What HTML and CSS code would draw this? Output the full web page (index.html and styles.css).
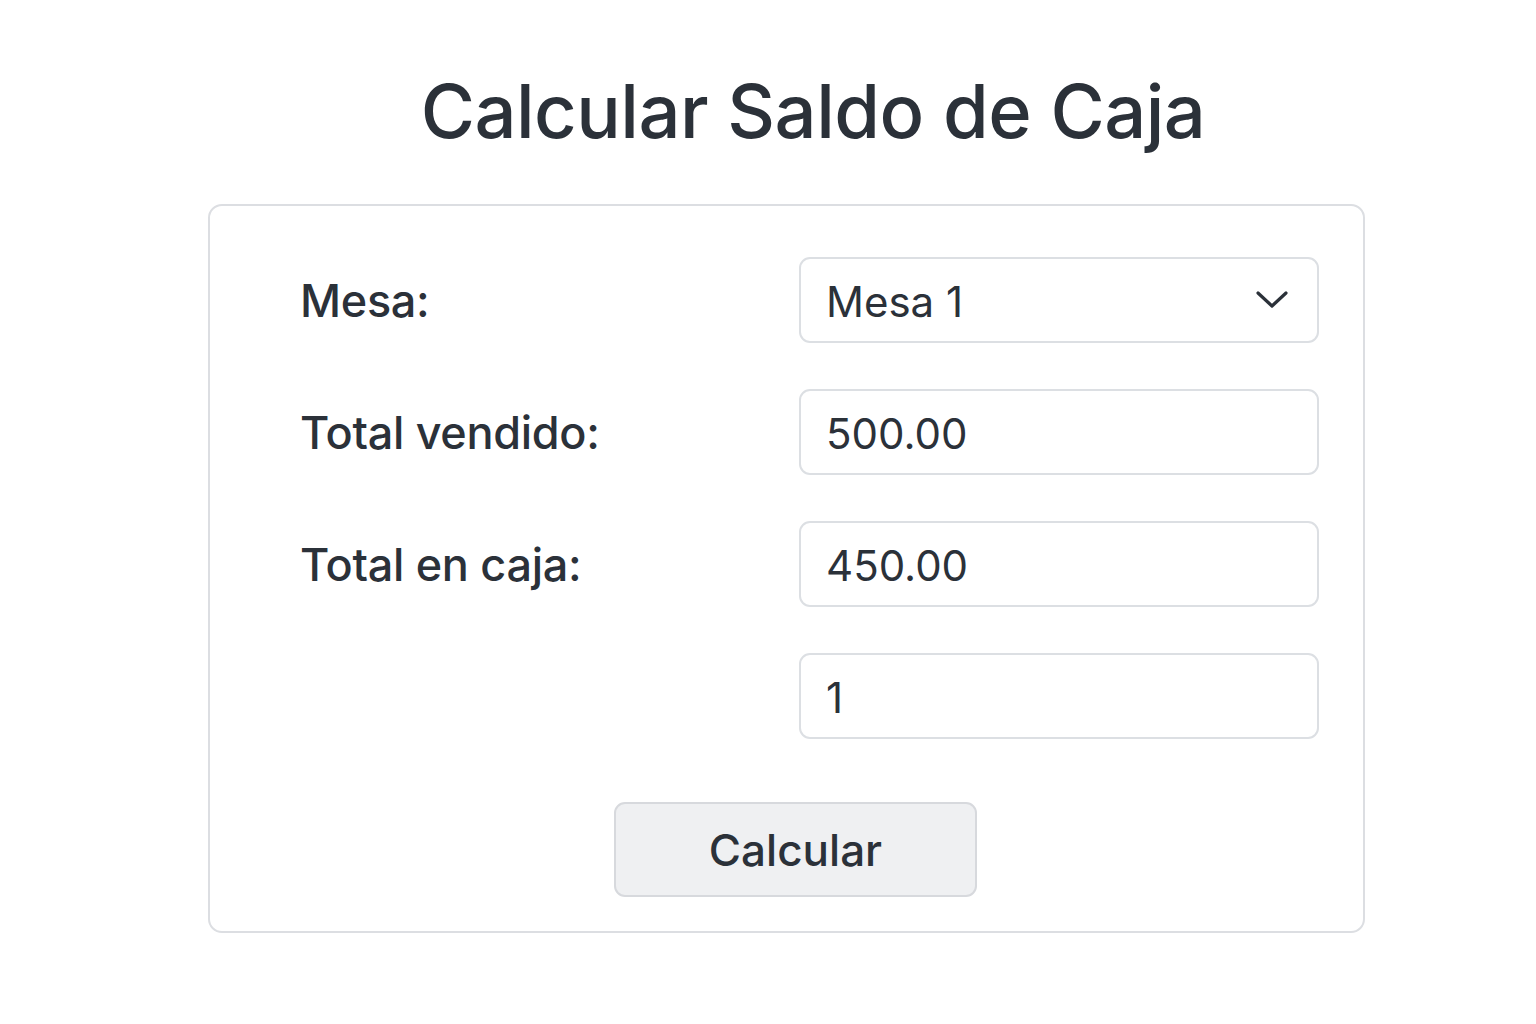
FILE: index.html
```html
<!DOCTYPE html>
<html lang="es">
<head>
<meta charset="utf-8">
<title>Calcular Saldo de Caja</title>
<link rel="stylesheet" href="styles.css">
</head>
<body>
<main class="page">
  <h1 class="title">Calcular Saldo de Caja</h1>
  <form class="card">
    <div class="row">
      <label class="label">Mesa:</label>
      <div class="field select">
        <span class="value">Mesa 1</span>
        <svg class="chevron" width="34" height="20" viewBox="0 0 34 20"><path d="M3 3 L17 16 L31 3" fill="none" stroke="#2b3139" stroke-width="3.2" stroke-linecap="round" stroke-linejoin="round"/></svg>
      </div>
    </div>
    <div class="row">
      <label class="label">Total vendido:</label>
      <div class="field"><span class="value">500.00</span></div>
    </div>
    <div class="row">
      <label class="label">Total en caja:</label>
      <div class="field"><span class="value">450.00</span></div>
    </div>
    <div class="row">
      <span class="label"></span>
      <div class="field"><span class="value">1</span></div>
    </div>
    <div class="actions">
      <button type="button" class="btn">Calcular</button>
    </div>
  </form>
</main>
</body>
</html>
```

FILE: styles.css
```css
* { box-sizing: border-box; }
html, body { margin: 0; background: #ffffff; }
body {
  font-family: Inter, "Noto Sans", "Liberation Sans", sans-serif;
  color: #2b3139;
}
.page {
  width: 1157px;
  margin-left: 208px;
  padding-top: 66px;
}
.title {
  margin: 0 0 48px 0;
  padding-left: 53px;
  text-align: center;
  font-size: 74px;
  font-weight: 500;
  line-height: 90px;
  letter-spacing: -0.5px;
}
.card {
  border: 2px solid #dcdee2;
  border-radius: 14px;
  padding: 51px 44px 34px 90px;
  display: flex;
  flex-direction: column;
  gap: 46px;
}
.row {
  display: grid;
  grid-template-columns: 499px 520px;
  align-items: center;
}
.label {
  font-size: 45px;
  font-weight: 500;
  letter-spacing: -0.3px;
}
.field {
  height: 86px;
  border: 2px solid #dcdfe3;
  border-radius: 11px;
  display: flex;
  align-items: center;
  justify-content: space-between;
  padding: 4px 28px 0 25px;
  font-size: 42px;
}
.field.select { padding-top: 3px; }
.value { line-height: 1; }
.chevron { display: block; margin-top: -3px; }
.actions {
  display: flex;
  justify-content: center;
  padding-top: 17px;
  margin-left: -28px;
}
.btn {
  width: 363px;
  height: 95px;
  background: #eff0f2;
  border: 2px solid #d7d9dd;
  border-radius: 11px;
  font-family: inherit;
  font-size: 44px;
  font-weight: 500;
  color: #2b3139;
}
```
